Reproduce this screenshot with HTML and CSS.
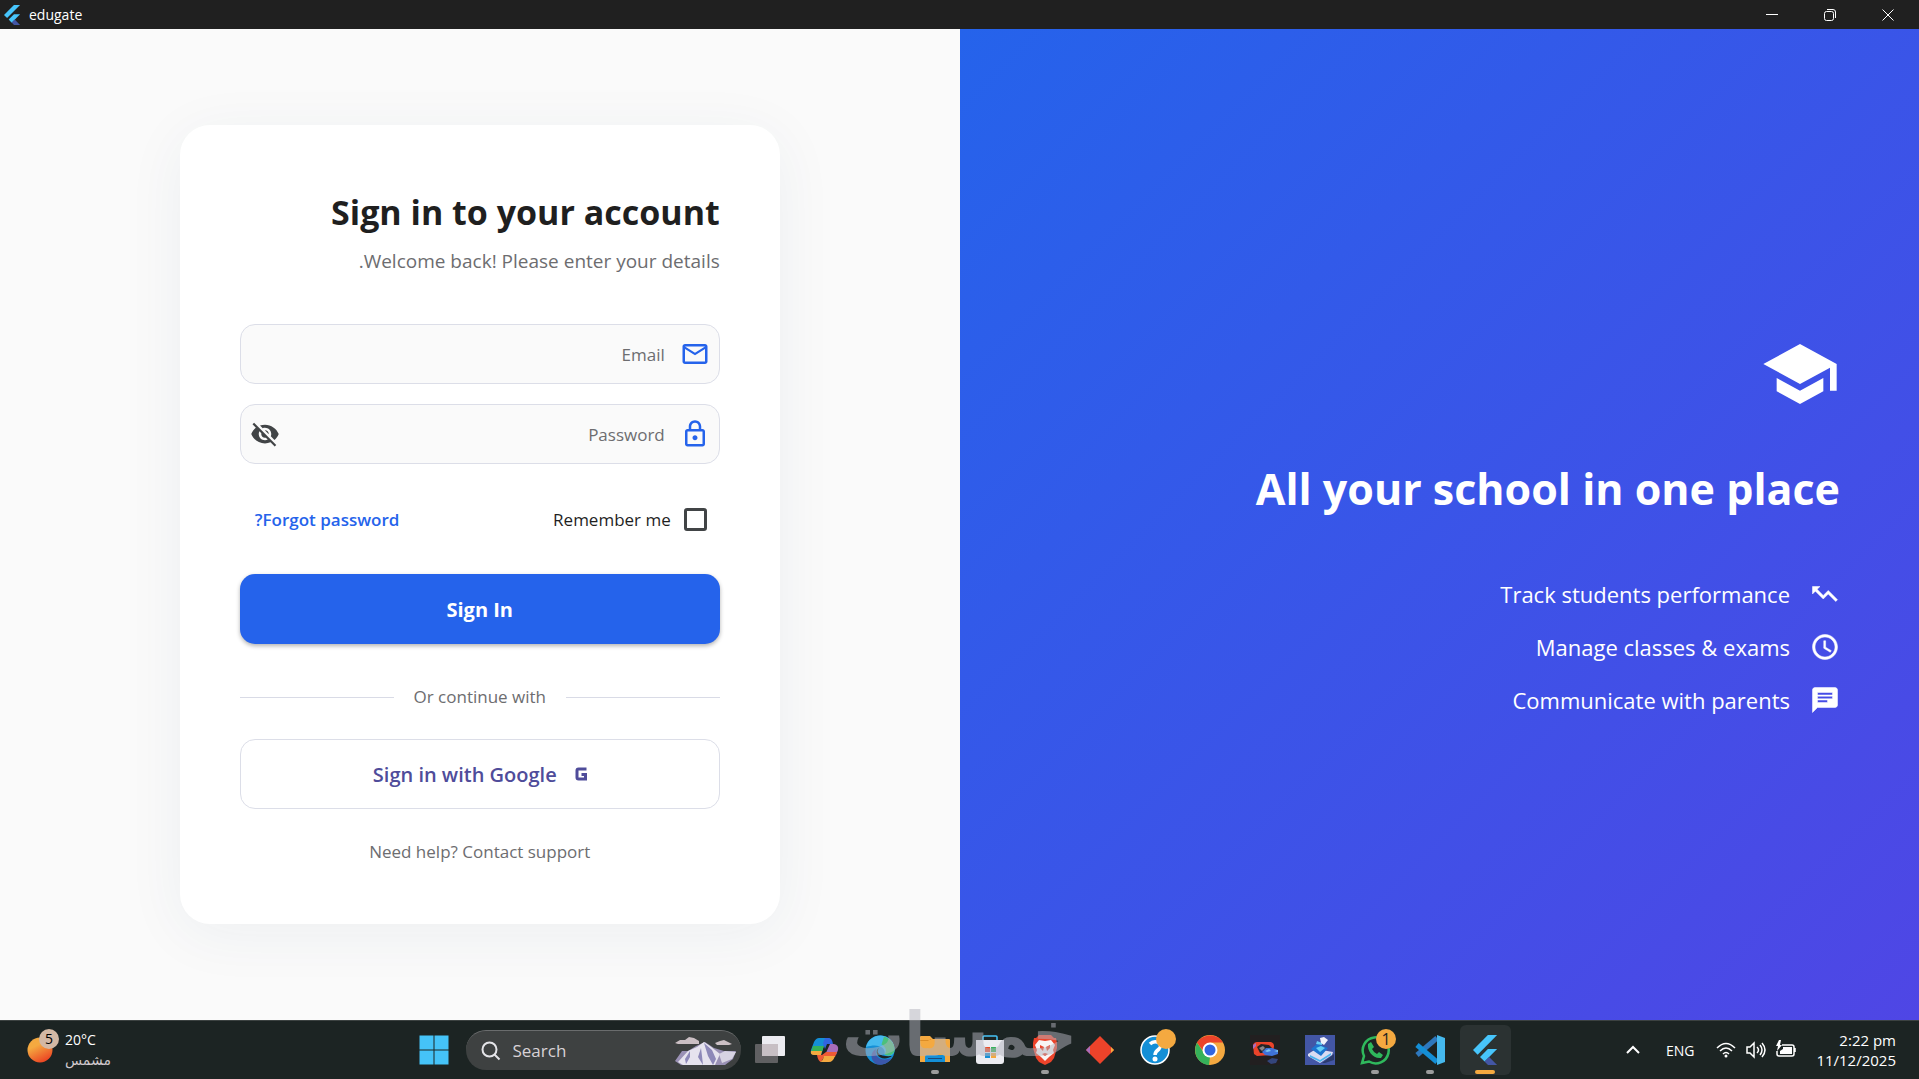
FILE: index.html
```html
<!DOCTYPE html>
<html lang="en">
<head>
    <meta charset="UTF-8">
    <meta name="viewport" content="width=device-width, initial-scale=1.0">
    <title>edugate</title>
    <link rel="stylesheet" href="styles.css">
</head>
<body>
    <header class="titlebar">
        <svg class="titlebar-logo" viewBox="0 0 24 24">
            <path fill="#47c5fb" d="M14.3 0L2.4 12l3.7 3.7L21.7 0z"/>
            <path fill="#47c5fb" d="M14.3 11.1L8 17.5l3.7 3.7 10-10.1z"/>
            <path fill="#4356a5" d="M11.6 21.1l2.8 2.9h7.3l-6.4-6.5z"/>
        </svg>
        <span class="titlebar-name">edugate</span>
        <div class="titlebar-controls">
            <button type="button" aria-label="Minimize"><svg viewBox="0 0 12 12"><path d="M0 5.5h12"/></svg></button>
            <button type="button" aria-label="Restore"><svg viewBox="0 0 12 12"><rect x=".5" y="2.5" width="9" height="9" rx="2"/><path d="M3 .5h6a2.5 2.5 0 0 1 2.5 2.5v6"/></svg></button>
            <button type="button" aria-label="Close"><svg viewBox="0 0 12 12"><path d="M.5.5l11 11M11.5.5l-11 11"/></svg></button>
        </div>
    </header>

    <main class="app" dir="rtl">
        <section class="hero">
            <svg class="hero-logo" viewBox="0 0 24 24"><path d="M5 13.18v4L12 21l7-3.82v-4L12 17l-7-3.82zM12 3L1 9l11 6 9-4.91V17h2V9L12 3z"/></svg>
            <h2 class="hero-title">All your school in one place</h2>
            <ul class="hero-list">
                <li>
                    <svg viewBox="0 0 24 24"><path d="M8 6L5.71 8.29l4.88 4.88 4-4L22 16.59 20.59 18l-6-6-4 4L4.3 9.71 2 12V6z"/></svg>
                    <span>Track students performance</span>
                </li>
                <li>
                    <svg viewBox="0 0 24 24"><path d="M12 2C6.5 2 2 6.5 2 12s4.5 10 10 10 10-4.5 10-10S17.5 2 12 2zm0 18c-4.4 0-8-3.6-8-8s3.6-8 8-8 8 3.6 8 8-3.6 8-8 8zm.5-13H11v6l5.2 3.2.8-1.3-4.5-2.7V7z"/></svg>
                    <span>Manage classes &amp; exams</span>
                </li>
                <li>
                    <svg viewBox="0 0 24 24"><path d="M20 2H4c-1.1 0-2 .9-2 2v18l4-4h14c1.1 0 2-.9 2-2V4c0-1.1-.9-2-2-2zM6 6h12v2H6V6zm8 8H6v-2h8v2zm4-3H6V9h12v2z"/></svg>
                    <span>Communicate with parents</span>
                </li>
            </ul>
        </section>

        <section class="login">
            <form class="card">
                <h1 class="card-title">Sign in to your account</h1>
                <p class="card-sub">Welcome back! Please enter your details.</p>

                <div class="field">
                    <svg viewBox="0 0 24 24"><path d="M22 6c0-1.1-.9-2-2-2H4c-1.1 0-2 .9-2 2v12c0 1.1.9 2 2 2h16c1.1 0 2-.9 2-2V6zm-2 0l-8 5-8-5h16zm0 12H4V8l8 5 8-5v10z"/></svg>
                    <input type="email" placeholder="Email" aria-label="Email">
                </div>
                <div class="field">
                    <svg viewBox="0 0 24 24"><path d="M18 8h-1V6c0-2.76-2.24-5-5-5S7 3.24 7 6v2H6c-1.1 0-2 .9-2 2v10c0 1.1.9 2 2 2h12c1.1 0 2-.9 2-2V10c0-1.1-.9-2-2-2zM9 6c0-1.66 1.34-3 3-3s3 1.34 3 3v2H9V6zm9 14H6V10h12v10zm-6-3c1.1 0 2-.9 2-2s-.9-2-2-2-2 .9-2 2 .9 2 2 2z"/></svg>
                    <input type="password" placeholder="Password" aria-label="Password">
                    <button type="button" class="field-eye" aria-label="Show password">
                        <svg viewBox="0 0 24 24"><path d="M12 7c2.76 0 5 2.24 5 5 0 .65-.13 1.26-.36 1.83l2.92 2.92c1.51-1.26 2.7-2.89 3.43-4.75-1.73-4.39-6-7.5-11-7.5-1.4 0-2.74.25-3.98.7l2.16 2.16C10.74 7.13 11.35 7 12 7zM2 4.27l2.28 2.28.46.46C3.08 8.3 1.78 10.02 1 12c1.73 4.39 6 7.5 11 7.5 1.55 0 3.03-.3 4.38-.84l.42.42L19.73 22 21 20.73 3.27 3 2 4.27zM7.53 9.8l1.55 1.55c-.05.21-.08.43-.08.65 0 1.66 1.34 3 3 3 .22 0 .44-.03.65-.08l1.55 1.55c-.67.33-1.41.53-2.2.53-2.76 0-5-2.24-5-5 0-.79.2-1.53.53-2.2zm4.31-.78l3.15 3.15.02-.16c0-1.66-1.34-3-3-3l-.17.01z"/></svg>
                    </button>
                </div>

                <div class="options">
                    <label class="remember"><input type="checkbox">Remember me</label>
                    <a href="#" class="forgot">Forgot password?</a>
                </div>

                <button type="submit" class="btn btn-primary">Sign In</button>
                <div class="divider">Or continue with</div>
                <button type="button" class="btn btn-google">
                    <svg viewBox="0 0 12 14"><path d="M11.500 2H3.500q-1.500 0-1.500 1.500v7q0 1.500 1.500 1.500h7V7.500H6.500"/></svg>
                    Sign in with Google
                </button>
                <a href="#" class="help">Need help? Contact support</a>
            </form>
        </section>
    </main>

    <footer class="taskbar">
        <div class="weather">
            <svg viewBox="0 0 34 36">
                <defs><linearGradient id="sun" x1="0" y1="0" x2=".5" y2="1"><stop offset=".4" stop-color="#f4a940"/><stop offset="1" stop-color="#ec4a25"/></linearGradient></defs>
                <circle cx="13" cy="22" r="12.500" fill="url(#sun)"/>
                <circle cx="22" cy="11" r="10" fill="#d3b8a4"/>
                <text x="22" y="16" text-anchor="middle">5</text>
            </svg>
            <div class="weather-text">
                <span>20°C</span>
                <small lang="ar">مشمس</small>
            </div>
        </div>

        <nav class="dock">
            <button type="button" class="dock-item" aria-label="Start">
                <svg viewBox="0 0 30 30"><path fill="#45c3f8" d="M.5.5h14v14H.5zM15.500.5h14v14h-14zM.5 15.500h14v14H.5zM15.500 15.500h14v14h-14z"/></svg>
            </button>
            <label class="search">
                <svg class="search-icon" viewBox="0 0 20 20"><circle cx="8.500" cy="8.500" r="7"/><path d="M13.500 13.500l5 5"/></svg>
                <input type="text" placeholder="Search" aria-label="Search">
                <svg class="search-art" viewBox="0 0 62 30">
                    <path fill="#cbbfc4" d="M0 7l5-3h5l4-3 5 1 5 3v3H3zM40 7l5-2 4-1 4 2 4 2-3 1H42z"/>
                    <path fill="#9a91b5" d="M0 25l7-10h6l8-5 9-4 9 6 10 3 12 0-3 8-8 6H6z"/>
                    <path fill="#e6e3ee" d="M3 26l10-11 9-4 7-5 6 4 10 8-5 11H8z"/>
                    <path fill="#8d88b8" d="M29 7l8 7 4 9-3 6-5-9zM15 15l-5 8 1 5 4-7zM26 12l-3 9 5 8-1-9z"/>
                    <path fill="#d7d3e2" d="M44 18l6-3 11 1-4 7-10 4z"/>
                </svg>
            </label>
            <button type="button" class="dock-item" aria-label="Task view">
                <svg viewBox="0 0 30 30"><rect x="7" y="1" width="23" height="20" rx="1" fill="#ececf1"/><rect x="0" y="9" width="23" height="19" rx="1" fill="#6c6b6d" opacity=".85"/><path fill="#c7bfc4" d="M7 9h16v12H7z"/></svg>
            </button>
            <button type="button" class="dock-item" aria-label="Copilot">
                <svg viewBox="0 0 30 30">
                    <path fill="#148fd6" d="M9 3h11l-5 4-4 13H4q-4-1-3-5l3-8q2-4 5-4z"/>
                    <path fill="#35b15a" d="M3 11h11l-2 6H1z"/><path fill="#f4a940" d="M1 16h11l-1 4H4q-4 0-3-4z"/>
                    <path fill="#3165e0" d="M15 3h4q3 0 4 6h-6l-2 5-2-6z"/>
                    <path fill="#a96dbb" d="M20 9h4q5 1 4 6l-2 5H15z"/>
                    <path fill="#ef5a35" d="M16 17h11l-2 5H14l-3 5q-3-1-4-7h5z"/>
                    <path fill="#f4a940" d="M14 21h11q-2 6-6 6h-9q3-1 4-6z"/>
                </svg>
            </button>
            <button type="button" class="dock-item" aria-label="Edge">
                <svg viewBox="0 0 30 30">
                    <circle cx="15" cy="15" r="14.500" fill="#148fd6"/>
                    <path fill="#45b9ee" d="M1 12C3 4 10 0 16 .5 24 1 30 7 29.500 15c0 5-5 7-10 5 2-8-7-12-18.500-8z"/>
                    <path fill="#4bc07c" d="M19 1.500c7 2 11 8 10.500 14-1 5-7 6-10 4 3-4 1-8-3-10z"/>
                    <path fill="#3b57ab" d="M11 14c-2 8 5 13 16 9-4 6-11 8-16 6-6-4-6-12 0-15z"/>
                    <path fill="#1c2423" d="M14 13c-4 5 1 9 13 8-5 4-13 3-15-2-1-3 0-5 2-6z"/>
                </svg>
            </button>
            <button type="button" class="dock-item open" aria-label="File Explorer">
                <svg viewBox="0 0 30 30"><path fill="#f4a940" d="M0 2q0-1 1-1h9l3 3h16q1 0 1 1v22H0z"/><path fill="#dc8d27" d="M12 4h-2L8 6H0V5h8z"/><path fill="#148fd6" d="M5 27v-5q0-2 2-2h16q2 0 2 2v5z"/><path fill="#1c4a7a" d="M8 23h14v1H8z"/></svg>
            </button>
            <button type="button" class="dock-item" aria-label="Store">
                <svg viewBox="0 0 30 30"><path fill="none" stroke="#45c3f8" stroke-width="1.500" d="M8 6V2q0-1 1-1h12q1 0 1 1v4"/><path fill="#ececf1" d="M1 5h28v21q0 3-3 3H4q-3 0-3-3z"/><path fill="#ec4a25" d="M10 12h5v5h-5z"/><path fill="#35b15a" d="M16 12h5v5h-5z"/><path fill="#148fd6" d="M10 18h5v5h-5z"/><path fill="#f4a940" d="M16 18h5v5h-5z"/></svg>
            </button>
            <button type="button" class="dock-item open" aria-label="Brave">
                <svg viewBox="0 0 30 30"><path fill="#ec432a" d="M9 0h12l3 3 2-0 1 5 0 5-3 10-3 4-6 3-6-3-3-4L3 13l0-5 1-5h2z"/><path fill="#f8f4f4" d="M9 5l6 1 6-1 4 5-2 5 1 3-5 4-4 4-4-4-5-4 1-3-2-5z"/><path fill="#ec432a" d="M10 10l4 2-1 4-3-3zM20 10l-4 2 1 4 3-3zM12 19l3-1 3 1-3 2z"/></svg>
            </button>
            <button type="button" class="dock-item" aria-label="Git">
                <svg viewBox="0 0 30 30"><path fill="#ec432a" d="M15 1l14 14-14 14L1 15z"/><path fill="#a96dbb" d="M5 11l-4 4 4 4z"/><path fill="#f4a940" d="M26 12l3 3-3 3z"/></svg>
            </button>
            <button type="button" class="dock-item" aria-label="Get Help">
                <svg viewBox="0 0 30 30"><circle cx="15" cy="15" r="14" fill="#148fd6" stroke="#fff" stroke-width="1.500"/><path fill="none" stroke="#fff" stroke-width="3.500" d="M10 9q3-3 7-2 6 3 2 7-4 3-4 6"/><circle cx="15" cy="24" r="2.500" fill="#fff"/><circle cx="26" cy="4" r="10" fill="#f4a940"/></svg>
            </button>
            <button type="button" class="dock-item" aria-label="Chrome">
                <svg viewBox="0 0 30 30"><circle cx="15" cy="15" r="15" fill="#f4a940"/><path fill="#35b15a" d="M2 7.500L9 18l6 4-1 8C3 29-3 18 2 7.500z"/><path fill="#ec432a" d="M2 7.500C8-2 23-2 28 7.500H15L9 17z"/><circle cx="15" cy="15" r="7.500" fill="#fff"/><circle cx="15" cy="15" r="5.500" fill="#3165e0"/></svg>
            </button>
            <button type="button" class="dock-item" aria-label="Game">
                <svg viewBox="0 0 30 30"><path fill="#221f20" d="M0 0h30v30H0z"/><path fill="#ec432a" d="M3 10q1-3 4-3l14 0q3 1 3 4l-1 9-16 1-3-2z"/><path fill="#a96dbb" d="M3 10l3-2v3l-3 3z"/><path fill="#262324" d="M7 12l4-3 8 1 3 3-6 5-6 0z"/><path fill="#8a8587" d="M9 13l4-2 2 2-3 3z"/><path fill="#3f72d8" d="M12 17l4-4 6 0 6 2v4l-6 2-7-1z"/><path fill="#7cc6f0" d="M15 16l4-2 2 2-4 1zM24 16l4-1v2z"/><path fill="#34457c" d="M17 26l5-3 6 1-2 4-5 1z"/></svg>
            </button>
            <button type="button" class="dock-item" aria-label="Setup">
                <svg viewBox="0 0 30 30"><path fill="#4356a5" d="M0 0h30v30H0z"/><path fill="#2c3b6c" d="M17 28l12-9v6l-9 3z"/><path fill="#d9dcf2" d="M3 19l8-5 17 3-1 3-12 8L3 21z"/><path fill="#49b3ee" d="M5 20l10 5 11-7v2l-11 7-10-5z"/><path fill="#1d74d0" d="M6 14l6-5 11 4-7 8z"/><path fill="#64cdf5" d="M11 13l5-2 4 2-5 4zM12 6l5 2v2l-6-1z"/><path fill="#f2f2fa" d="M15 3l4-1 4 3-4 5-3-2z"/></svg>
            </button>
            <button type="button" class="dock-item open" aria-label="WhatsApp">
                <svg viewBox="0 0 30 30">
                    <path fill="none" stroke="#2fb85c" stroke-width="2.500" d="M2 28l2-7A13 13 0 1 1 9 26.500z"/>
                    <path fill="#2fb85c" d="M8 9l3-2 3 5-2 2q2 4 5 5l2-2 4 3-2 3C13 24 7 16 8 9z"/>
                    <circle cx="26" cy="4" r="10" fill="#f4a940"/>
                    <text x="26" y="10" text-anchor="middle">1</text>
                </svg>
            </button>
            <button type="button" class="dock-item open" aria-label="Visual Studio Code">
                <svg viewBox="0 0 30 30"><path fill="none" stroke="#2e78bd" stroke-width="5" d="M2 20L22 3"/><path fill="none" stroke="#148fd6" stroke-width="5" d="M2 10l20 17"/><path fill="#45b9ee" d="M22 0l8 3v24l-8 3z"/></svg>
            </button>
            <button type="button" class="dock-item open active" aria-label="edugate">
                <svg viewBox="0 0 24 24">
                    <path fill="#47c5fb" d="M14.3 0L2.400 12l3.700 3.700L21.700 0z"/>
                    <path fill="#47c5fb" d="M14.300 11.100L8 17.500l3.700 3.700 10-10.100z"/>
                    <path fill="#4356a5" d="M11.600 21.100l2.800 2.900h7.300l-6.400-6.500z"/>
                </svg>
            </button>
        </nav>

        <div class="tray">
            <svg class="tray-chevron" viewBox="0 0 14 14"><path d="M1 10l6-6 6 6"/></svg>
            <span>ENG</span>
            <div class="tray-icons">
                <svg viewBox="0 0 20 20"><path d="M1 8q9-9 18 0M4 11q6-6 12 0M7 14q3-3 6 0"/><circle cx="10" cy="16" r="1.500" fill="#fff" stroke="none"/></svg>
                <svg viewBox="0 0 20 20"><path d="M1 7v6h3l4 4V3L4 7zM11 7q3 3 0 6M14 5q4 5 0 10M16 3q6 7 0 14"/></svg>
                <svg viewBox="0 0 20 20"><path d="M6 5h10q2 0 2 2v7q0 2-2 2H3q-2 0-2-2v-3M19 8v4"/><path fill="#fff" stroke="none" d="M7 7h9v7H4v-3l3-2zM3 0L0 6h2l-1 5 5-6H4l1-5z"/></svg>
            </div>
            <div class="clock">
                <time>2:22 pm</time>
                <time>11/12/2025</time>
            </div>
        </div>
        <div class="watermark" lang="ar">خمسات</div>
    </footer>
</body>
</html>
```

FILE: styles.css
```css
* {
    margin: 0;
    padding: 0;
    box-sizing: border-box;
}
body {
    min-height: 100vh;
    display: flex;
    flex-direction: column;
    font-family: "Open Sans", "Noto Sans", sans-serif;
    font-size: 17px;
    color: #1f1f1f;
    background-color: #fafafa;
}
button {
    border: 0;
    background: none;
    font-family: inherit;
    cursor: pointer;
}
input {
    border: 0;
    outline: 0;
    background: none;
    font-family: inherit;
}
a {
    text-decoration: none;
}
svg {
    display: block;
    flex-shrink: 0;
    overflow: visible;
}

/* title bar */
.titlebar {
    height: 29px;
    display: flex;
    align-items: center;
    background-color: #202020;
    color: #fff;
    font-size: 14px;
}
.titlebar-logo {
    width: 20px;
    height: 20px;
    margin-inline: 2px 7px;
}
.titlebar-controls {
    margin-left: auto;
    padding-right: 2px;
    display: flex;
}
.titlebar-controls button {
    width: 58px;
    height: 29px;
    display: grid;
    place-items: center;
}
.titlebar-controls svg {
    width: 12px;
    height: 12px;
    fill: none;
    stroke: #fff;
}

.app {
    flex: 1;
    display: grid;
    grid-template-columns: 1fr 1fr;
}

/* hero */
.hero {
    padding: 40px 79px;
    display: flex;
    flex-direction: column;
    justify-content: center;
    align-items: flex-start;
    color: #fff;
    background: linear-gradient(135deg, #2563eb, #4f46e5);
}
.hero-logo {
    width: 80px;
    height: 80px;
    fill: #fff;
}
.hero-title {
    margin: 42px 0 58px;
    font-size: 43px;
    line-height: 65px;
}
.hero-list {
    list-style: none;
    display: grid;
    gap: 23px;
}
.hero-list li {
    display: flex;
    align-items: center;
    gap: 20px;
    font-size: 22px;
    line-height: 30px;
}
.hero-list svg {
    width: 30px;
    height: 30px;
    fill: #fff;
    stroke: #fff;
    stroke-width: 0.4;
}

/* login */
.login {
    display: grid;
    place-items: center;
    padding: 20px;
}
.card {
    width: 100%;
    max-width: 600px;
    padding: 60px;
    display: flex;
    flex-direction: column;
    border-radius: 30px;
    background-color: #fff;
    box-shadow: 0 10px 60px rgba(30, 60, 110, 0.06);
}
.card-title {
    font-size: 34px;
    line-height: 55px;
}
.card-sub {
    margin: 8px 0 50px;
    font-size: 19px;
    line-height: 26px;
    color: #6d6d70;
}
.field {
    height: 60px;
    margin-bottom: 20px;
    padding-inline: 9px;
    display: flex;
    align-items: center;
    gap: 15px;
    border: 1px solid #dcdee8;
    border-radius: 15px;
    background-color: #fafafa;
}
.field svg {
    width: 30px;
    height: 30px;
    fill: #2563eb;
}
.field input {
    flex: 1;
    min-width: 0;
    height: 100%;
    font-size: 17px;
    text-align: right;
}
.field input::placeholder {
    color: #6d6d70;
    opacity: 1;
}
.field-eye svg {
    fill: #414446;
}
.options {
    height: 50px;
    margin: 10px 0 30px;
    display: flex;
    align-items: center;
    justify-content: space-between;
    padding-inline: 13px 15px;
}
.remember {
    display: flex;
    align-items: center;
    gap: 13px;
}
.remember input {
    appearance: none;
    width: 23px;
    height: 23px;
    border: 3px solid #414446;
    border-radius: 3px;
}
.remember input:checked {
    background-color: #2563eb;
}
.forgot {
    color: #2563eb;
    font-weight: 600;
}
.btn {
    height: 70px;
    display: flex;
    align-items: center;
    justify-content: center;
    border-radius: 15px;
    font-size: 20px;
}
.btn-primary {
    color: #fff;
    font-weight: 700;
    background-color: #2563eb;
    box-shadow: 0 2px 4px rgba(0, 0, 0, 0.3);
}
.divider {
    margin: 40px 0 29px;
    display: flex;
    align-items: center;
    gap: 20px;
    line-height: 26px;
    color: #6d6d70;
}
.divider::before,
.divider::after {
    content: "";
    flex: 1;
    height: 1px;
    background-color: #d9dbe6;
}
.btn-google {
    gap: 18px;
    border: 1px solid #dcdee8;
    color: #4f4c9a;
    font-weight: 600;
}
.btn-google svg {
    width: 12px;
    height: 14px;
    fill: none;
    stroke: #4f4c9a;
    stroke-width: 3;
}
.help {
    margin-top: 30px;
    line-height: 25px;
    text-align: center;
    color: #6d6d70;
}

/* taskbar */
.taskbar {
    position: relative;
    height: 59px;
    display: grid;
    grid-template-columns: 1fr auto 1fr;
    align-items: center;
    border-top: 1px solid #3c4241;
    background-color: #1c2423;
    color: #fff;
    font-size: 14px;
}
.weather {
    display: flex;
    align-items: center;
    gap: 4px;
    padding-left: 27px;
}
.weather svg {
    width: 34px;
    height: 36px;
    margin-bottom: 8px;
}
.weather svg text {
    font-size: 14px;
}
.weather-text {
    display: grid;
    line-height: 20px;
}
.weather-text small {
    font-family: "DejaVu Sans", sans-serif;
    font-size: 14px;
    color: #cfc8cc;
}
.dock {
    display: flex;
    align-items: center;
}
.dock-item {
    position: relative;
    width: 55px;
    height: 50px;
    display: grid;
    place-items: center;
}
.dock-item svg {
    width: 30px;
    height: 30px;
}
.dock-item text {
    font-size: 16px;
    fill: #222;
}
.dock-item.open::after {
    content: "";
    position: absolute;
    bottom: 1px;
    left: 50%;
    width: 8px;
    height: 4px;
    border-radius: 2px;
    background-color: #9b9c9c;
    transform: translateX(-50%);
}
.dock-item.active {
    width: 51px;
    margin-inline: 2px;
    border-radius: 6px;
    background-color: #2b3232;
}
.dock-item.active::after {
    width: 20px;
    background-color: #f4a940;
}
.search {
    width: 275px;
    height: 40px;
    margin-inline: 4px 2px;
    padding-inline: 15px 4px;
    display: flex;
    align-items: center;
    gap: 12px;
    border-top: 1px solid #6a6c6d;
    border-radius: 20px;
    background-color: #3e4141;
}
.search-icon {
    width: 20px;
    height: 20px;
    fill: none;
    stroke: #e4e4e8;
    stroke-width: 2;
}
.search input {
    flex: 1;
    min-width: 0;
    font-size: 17px;
    color: #fff;
}
.search input::placeholder {
    color: #d8d2d6;
    opacity: 1;
}
.search-art {
    width: 62px;
    height: 30px;
}
.tray {
    display: flex;
    align-items: center;
    justify-content: flex-end;
    padding-right: 23px;
}
.tray svg {
    fill: none;
    stroke: #fff;
}
.tray-chevron {
    width: 14px;
    height: 14px;
    margin-right: 26px;
    stroke-width: 2;
}
.tray-icons {
    display: flex;
    gap: 10px;
    margin-inline: 22px 20px;
}
.tray-icons svg {
    width: 20px;
    height: 20px;
    stroke-width: 1.5;
}
.clock {
    display: grid;
    font-size: 15px;
    line-height: 20px;
    text-align: right;
}
.watermark {
    position: absolute;
    left: 50%;
    bottom: 8px;
    transform: translateX(-50%);
    font-family: "DejaVu Sans", sans-serif;
    font-size: 62px;
    font-weight: 700;
    line-height: 72px;
    color: #b4b4be;
    opacity: 0.5;
    pointer-events: none;
}
```
